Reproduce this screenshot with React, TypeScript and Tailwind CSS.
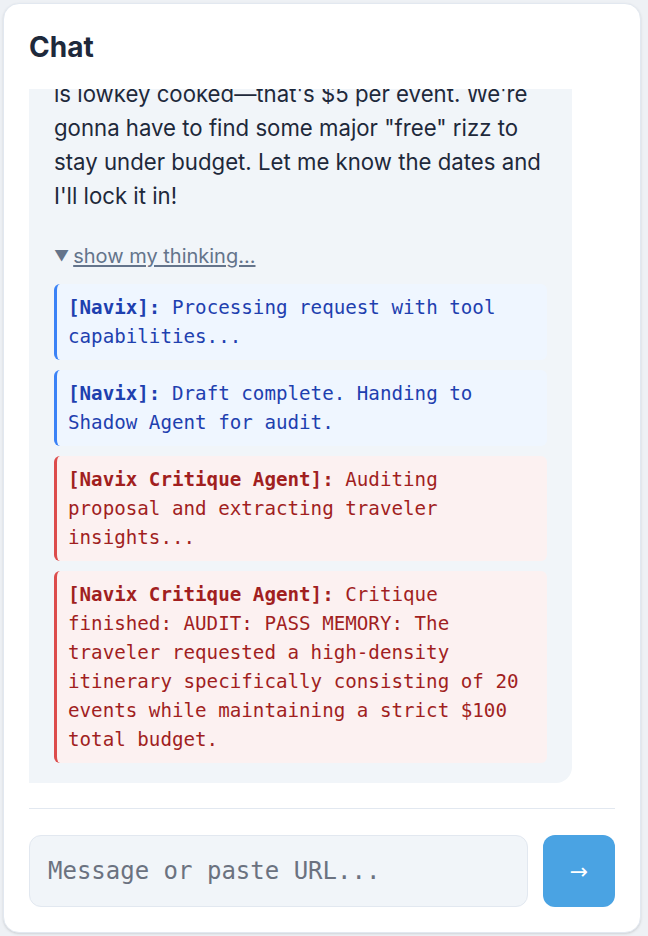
import React from "react";

type Step = { agent: string; text: string; tone: "blue" | "red" };

const steps: Step[] = [
  { agent: "[Navix]:", text: "Processing request with tool capabilities...", tone: "blue" },
  { agent: "[Navix]:", text: "Draft complete. Handing to Shadow Agent for audit.", tone: "blue" },
  {
    agent: "[Navix Critique Agent]:",
    text: "Auditing proposal and extracting traveler insights...",
    tone: "red",
  },
  {
    agent: "[Navix Critique Agent]:",
    text: "Critique finished: AUDIT: PASS MEMORY: The traveler requested a high-density itinerary specifically consisting of 20 events while maintaining a strict $100 total budget.",
    tone: "red",
  },
];

const sans = "font-['Inter','Noto_Sans',sans-serif]";
const mono = "font-['DejaVu_Sans_Mono','Liberation_Mono',monospace]";

function StepBox({ step }: { step: Step }) {
  const blue = step.tone === "blue";
  return (
    <div
      className={`rounded-md border-l-[3px] py-[9px] pl-[11px] pr-[16px] text-[19.2px] leading-[29px] ${mono} ${
        blue
          ? "border-[#3b82f6] bg-[#eff6ff] text-[#1e40af]"
          : "border-[#dc4c4c] bg-[#fcf1f1] text-[#a11f1f]"
      }`}
    >
      <span className="font-bold">{step.agent}</span> {step.text}
    </div>
  );
}

export default function App() {
  return (
    <div className={`h-[936px] w-[648px] bg-[#eef1f5] p-[3px] ${sans}`}>
      <div className="flex h-[930px] w-[638px] flex-col rounded-2xl border border-[#e2e8f0] bg-white px-[25px] pb-[25px] shadow-sm">
        <div className="flex h-[85px] shrink-0 items-center">
          <h1 className="text-[28px] font-bold text-[#1e293b]">Chat</h1>
        </div>

        <div className="flex min-h-0 flex-1 flex-col justify-end overflow-hidden pb-[25px]">
          <div className="w-[543px] shrink-0 rounded-2xl rounded-bl-none bg-[#f1f5f9] px-[25px] pb-[20px] pt-4">
            <p className="text-[22.2px] leading-[34px] text-[#1e293b]">
              is lowkey cooked—that's $5 per event. We're gonna have to find some major "free" rizz
              to stay under budget. Let me know the dates and I'll lock it in!
            </p>

            <div className="mt-[29px]">
              <div className="flex items-center gap-[4px] text-[20px] leading-[28px] text-[#64748b]">
                <span className="text-[15px]">▼</span>
                <span className="underline underline-offset-2">show my thinking...</span>
              </div>
              <div className="mt-[14px] flex flex-col gap-[10px]">
                {steps.map((s, i) => (
                  <StepBox key={i} step={s} />
                ))}
              </div>
            </div>
          </div>
        </div>

        <div className="border-t border-[#e2e8f0] pt-[26px]">
          <div className="flex gap-[15px]">
            <input
              placeholder="Message or paste URL..."
              className={`h-[72px] min-w-0 flex-1 rounded-xl border border-[#e2e8f0] bg-[#f1f5f9] px-[18px] text-[24px] text-[#1e293b] outline-none placeholder:text-[#6b7280] ${mono}`}
            />
            <button className="flex h-[72px] w-[72px] shrink-0 items-center justify-center rounded-xl bg-[#4aa3e3] font-['DejaVu_Sans',sans-serif] text-[22px] text-white">
              →
            </button>
          </div>
        </div>
      </div>
    </div>
  );
}
